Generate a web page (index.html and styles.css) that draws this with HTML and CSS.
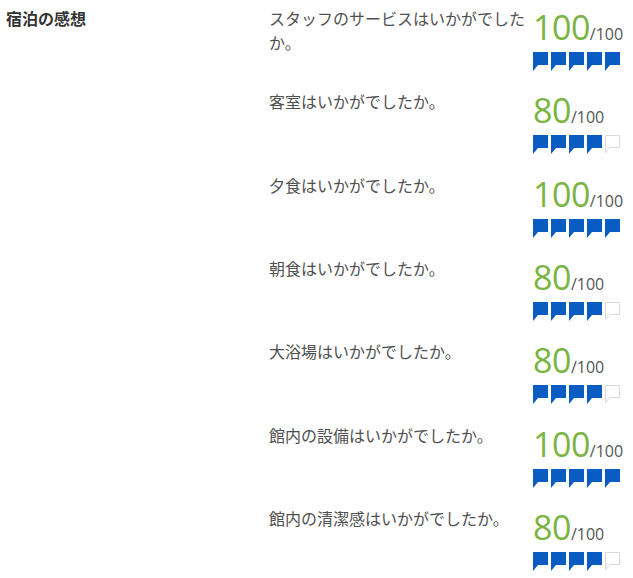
FILE: index.html
```html
<!DOCTYPE html>
<html lang="ja">
<head>
<meta charset="utf-8">
<link rel="stylesheet" href="styles.css">
</head>
<body>
<section class="review">
  <h3 class="label">宿泊の感想</h3>
  <div class="rows">
    <div class="row">
      <p class="question">スタッフのサービスはいかがでしたか。</p>
      <div class="score">
        <div class="num"><span class="big">100</span><span class="max">/100</span></div>
        <div class="icons"><svg class="on" viewBox="0 0 15 19"><path d="M0 0H15V13H5L0 19Z"/></svg><svg class="on" viewBox="0 0 15 19"><path d="M0 0H15V13H5L0 19Z"/></svg><svg class="on" viewBox="0 0 15 19"><path d="M0 0H15V13H5L0 19Z"/></svg><svg class="on" viewBox="0 0 15 19"><path d="M0 0H15V13H5L0 19Z"/></svg><svg class="on" viewBox="0 0 15 19"><path d="M0 0H15V13H5L0 19Z"/></svg></div>
      </div>
    </div>
    <div class="row">
      <p class="question">客室はいかがでしたか。</p>
      <div class="score">
        <div class="num"><span class="big">80</span><span class="max">/100</span></div>
        <div class="icons"><svg class="on" viewBox="0 0 15 19"><path d="M0 0H15V13H5L0 19Z"/></svg><svg class="on" viewBox="0 0 15 19"><path d="M0 0H15V13H5L0 19Z"/></svg><svg class="on" viewBox="0 0 15 19"><path d="M0 0H15V13H5L0 19Z"/></svg><svg class="on" viewBox="0 0 15 19"><path d="M0 0H15V13H5L0 19Z"/></svg><svg class="off" viewBox="0 0 15 19"><path d="M0.5 0.5H14.5V12.5H4.8L0.5 17.8Z"/></svg></div>
      </div>
    </div>
    <div class="row">
      <p class="question">夕食はいかがでしたか。</p>
      <div class="score">
        <div class="num"><span class="big">100</span><span class="max">/100</span></div>
        <div class="icons"><svg class="on" viewBox="0 0 15 19"><path d="M0 0H15V13H5L0 19Z"/></svg><svg class="on" viewBox="0 0 15 19"><path d="M0 0H15V13H5L0 19Z"/></svg><svg class="on" viewBox="0 0 15 19"><path d="M0 0H15V13H5L0 19Z"/></svg><svg class="on" viewBox="0 0 15 19"><path d="M0 0H15V13H5L0 19Z"/></svg><svg class="on" viewBox="0 0 15 19"><path d="M0 0H15V13H5L0 19Z"/></svg></div>
      </div>
    </div>
    <div class="row">
      <p class="question">朝食はいかがでしたか。</p>
      <div class="score">
        <div class="num"><span class="big">80</span><span class="max">/100</span></div>
        <div class="icons"><svg class="on" viewBox="0 0 15 19"><path d="M0 0H15V13H5L0 19Z"/></svg><svg class="on" viewBox="0 0 15 19"><path d="M0 0H15V13H5L0 19Z"/></svg><svg class="on" viewBox="0 0 15 19"><path d="M0 0H15V13H5L0 19Z"/></svg><svg class="on" viewBox="0 0 15 19"><path d="M0 0H15V13H5L0 19Z"/></svg><svg class="off" viewBox="0 0 15 19"><path d="M0.5 0.5H14.5V12.5H4.8L0.5 17.8Z"/></svg></div>
      </div>
    </div>
    <div class="row">
      <p class="question">大浴場はいかがでしたか。</p>
      <div class="score">
        <div class="num"><span class="big">80</span><span class="max">/100</span></div>
        <div class="icons"><svg class="on" viewBox="0 0 15 19"><path d="M0 0H15V13H5L0 19Z"/></svg><svg class="on" viewBox="0 0 15 19"><path d="M0 0H15V13H5L0 19Z"/></svg><svg class="on" viewBox="0 0 15 19"><path d="M0 0H15V13H5L0 19Z"/></svg><svg class="on" viewBox="0 0 15 19"><path d="M0 0H15V13H5L0 19Z"/></svg><svg class="off" viewBox="0 0 15 19"><path d="M0.5 0.5H14.5V12.5H4.8L0.5 17.8Z"/></svg></div>
      </div>
    </div>
    <div class="row">
      <p class="question">館内の設備はいかがでしたか。</p>
      <div class="score">
        <div class="num"><span class="big">100</span><span class="max">/100</span></div>
        <div class="icons"><svg class="on" viewBox="0 0 15 19"><path d="M0 0H15V13H5L0 19Z"/></svg><svg class="on" viewBox="0 0 15 19"><path d="M0 0H15V13H5L0 19Z"/></svg><svg class="on" viewBox="0 0 15 19"><path d="M0 0H15V13H5L0 19Z"/></svg><svg class="on" viewBox="0 0 15 19"><path d="M0 0H15V13H5L0 19Z"/></svg><svg class="on" viewBox="0 0 15 19"><path d="M0 0H15V13H5L0 19Z"/></svg></div>
      </div>
    </div>
    <div class="row">
      <p class="question">館内の清潔感はいかがでしたか。</p>
      <div class="score">
        <div class="num"><span class="big">80</span><span class="max">/100</span></div>
        <div class="icons"><svg class="on" viewBox="0 0 15 19"><path d="M0 0H15V13H5L0 19Z"/></svg><svg class="on" viewBox="0 0 15 19"><path d="M0 0H15V13H5L0 19Z"/></svg><svg class="on" viewBox="0 0 15 19"><path d="M0 0H15V13H5L0 19Z"/></svg><svg class="on" viewBox="0 0 15 19"><path d="M0 0H15V13H5L0 19Z"/></svg><svg class="off" viewBox="0 0 15 19"><path d="M0.5 0.5H14.5V12.5H4.8L0.5 17.8Z"/></svg></div>
      </div>
    </div>
  </div>
</section>
</body>
</html>
```
FILE: styles.css
```css
html, body {
  margin: 0;
  padding: 0;
  background: #fff;
}
body {
  font-family: "Noto Sans CJK JP", "Noto Sans", sans-serif;
  color: #555;
}
.review {
  display: flex;
  padding: 6px 0 0 6px;
}
.label {
  flex: 0 0 263px;
  margin: 0;
  font-size: 16px;
  line-height: 24px;
  font-weight: bold;
  color: #333;
}
.rows {
  display: flex;
  flex-direction: column;
}
.row {
  display: flex;
  height: 83.33px;
}
.question {
  flex: 0 0 264px;
  margin: 0;
  font-size: 16px;
  line-height: 24px;
  color: #505050;
}
.score {
  width: 95px;
  padding-top: 3px;
}
.num {
  font-family: "Open Sans", "Noto Sans", sans-serif;
  font-size: 34px;
  line-height: 36px;
  height: 36px;
  white-space: nowrap;
}
.big {
  color: #7ab443;
  letter-spacing: -0.5px;
}
.max {
  font-size: 16px;
  line-height: 1;
  color: #555;
}
.icons {
  display: flex;
  gap: 3px;
  margin-top: 7px;
}
.icons svg {
  flex: 0 0 15px;
  width: 15px;
  height: 19px;
  display: block;
}
.icons .on {
  fill: #0b5cc2;
}
.icons .off {
  fill: #fff;
  stroke: #dadada;
  stroke-width: 1;
}
```
